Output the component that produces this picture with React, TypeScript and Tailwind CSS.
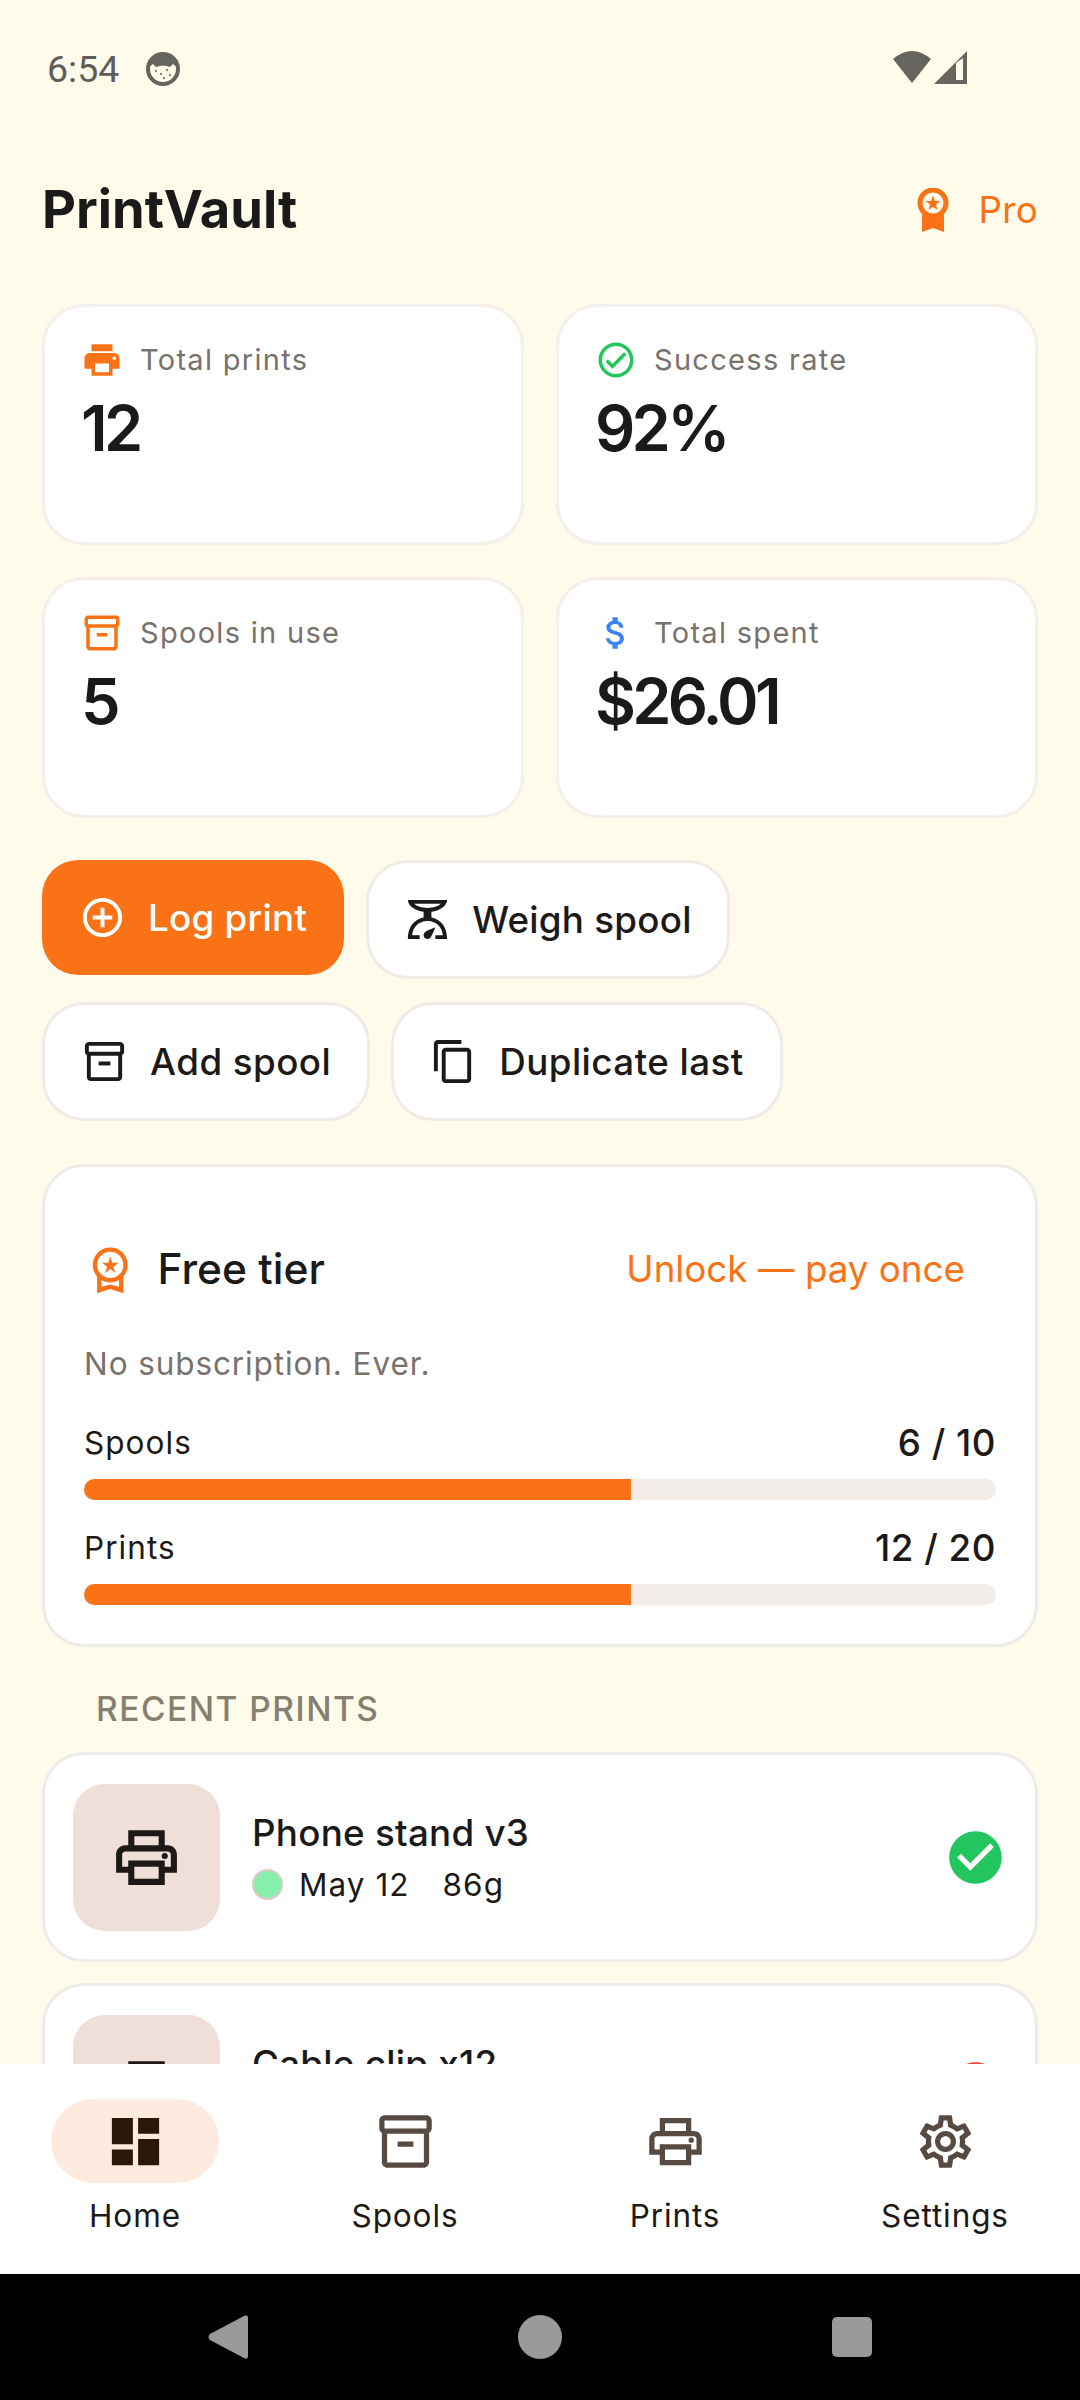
import type { ReactNode } from "react";
import {
  MdAddCircleOutline,
  MdAttachMoney,
  MdCancel,
  MdCheckCircle,
  MdDashboard,
  MdOutlineCheckCircle,
  MdOutlineContentCopy,
  MdOutlineInventory2,
  MdOutlinePrint,
  MdOutlineScale,
  MdOutlineSettings,
  MdOutlineWorkspacePremium,
  MdPrint,
} from "react-icons/md";

function StatusBar() {
  return (
    <div className="flex h-[126px] shrink-0 items-start justify-between pl-[47px] pr-[113px] pt-[50px]">
      <div className="flex items-center gap-[27px]">
        <span className="text-[37.5px] leading-[38px] text-[#5f5e58] [font-family:Roboto,sans-serif]">6:54</span>
        <svg viewBox="0 0 34 34" className="h-[34px] w-[34px]">
          <circle cx="17" cy="17" r="15" fill="#fffbeb" stroke="#65645e" strokeWidth="4" />
          <path d="M3 15 Q3 2 17 2 Q31 2 31 15 L27 12 L24 15 Q17 12 10 15 L7 12Z" fill="#65645e" />
          <circle cx="10" cy="19" r="1.2" fill="#8a8980" />
          <circle cx="15" cy="22" r="1.2" fill="#8a8980" />
          <circle cx="21" cy="18" r="1.2" fill="#8a8980" />
          <circle cx="24" cy="23" r="1.2" fill="#8a8980" />
          <circle cx="18" cy="26" r="1.2" fill="#8a8980" />
        </svg>
      </div>
      <div className="flex items-center gap-[3px]">
        <svg viewBox="0 0 38 34" className="h-[34px] w-[38px]">
          <path d="M0 9 Q19 -7 38 9 L19 33Z" fill="#65645e" />
        </svg>
        <svg viewBox="0 0 33 33" className="h-[33px] w-[33px]">
          <path d="M33 0 V33 H0Z" fill="#65645e" />
          <path d="M22 12 V29 H29 V7 Z" fill="#fffbeb" />
        </svg>
      </div>
    </div>
  );
}

function StatCard({ icon, label, value }: { icon: ReactNode; label: string; value: string }) {
  return (
    <div className="h-[241px] rounded-[42px] border-[3px] border-[#f4efea] bg-white pl-[36px] pt-[32px]">
      <div className="flex h-[42px] items-center gap-[17px]">
        {icon}
        <span className="text-[29px] tracking-[1.3px] text-[#78716c]">{label}</span>
      </div>
      <div className="mt-[7px] text-[63px] font-[580] leading-[80px] tracking-[-3.7px] text-[#1a1a1a]">{value}</div>
    </div>
  );
}

function ActionButton({ icon, label, primary, wide }: { icon: ReactNode; label: string; primary?: boolean; wide?: boolean }) {
  if (primary) {
    return (
      <div className="flex h-[115px] items-center gap-[22px] rounded-[36px] bg-[#f97316] px-[37px] text-[36.75px] font-medium tracking-[0.26px] text-white">
        {icon}
        {label}
      </div>
    );
  }
  return (
    <div
      className={`flex h-[119px] items-center rounded-[42px] border-[3px] border-[#f1ebe7] bg-white text-[36.75px] font-medium text-[#1c1917] ${
        wide ? "gap-[22px] px-[36px] tracking-[0.45px]" : "gap-[21px] px-[35px] tracking-[0.26px]"
      }`}
    >
      {icon}
      {label}
    </div>
  );
}

function Usage({ label, value, top }: { label: string; value: string; top: string }) {
  return (
    <div className={top}>
      <div className="flex h-[42px] items-center justify-between text-[#1c1917]">
        <span className="text-[31.5px] tracking-[1.05px]">{label}</span>
        <span className="text-[36.75px] font-medium tracking-[0.5px]">{value}</span>
      </div>
      <div className="mt-[15px] h-[21px] overflow-hidden rounded-full bg-[#f2ede9]">
        <div className="h-full w-[60%] bg-[#f97316]" />
      </div>
    </div>
  );
}

function PrintRow({ name, date, weight, dot, status }: { name: string; date: string; weight: string; dot: string; status: ReactNode }) {
  return (
    <div className="flex h-[210px] shrink-0 items-center rounded-[42px] border-[3px] border-[#eeecea] bg-white px-[28px]">
      <div className="flex h-[147px] w-[147px] shrink-0 items-center justify-center rounded-[32px] bg-[#f0ded8]">
        <MdOutlinePrint className="text-[73px] text-[#1c1917]" />
      </div>
      <div className="ml-[32px] flex-1">
        <div className="text-[36.75px] font-medium leading-[46px] tracking-[0.26px] text-[#1a1a1a]">{name}</div>
        <div className="mt-[9px] flex items-center text-[31.5px] leading-[40px] tracking-[1.05px] text-[#1c1917]">
          <span className={`h-[31px] w-[31px] rounded-full border-[2px] border-[#e0c9c2] ${dot}`} />
          <span className="ml-[16px]">{date}</span>
          <span className="ml-[33px]">{weight}</span>
        </div>
      </div>
      {status}
    </div>
  );
}

function NavItem({ icon, label, active }: { icon: ReactNode; label: string; active?: boolean }) {
  return (
    <div className="flex flex-col items-center">
      <div
        className={`flex h-[84px] w-[168px] items-center justify-center rounded-[42px] text-[63px] ${
          active ? "bg-[#feebdf] text-[#2b1708]" : "text-[#574a42]"
        }`}
      >
        {icon}
      </div>
      <div className="mt-[12px] text-[31.5px] leading-[42px] tracking-[0.9px] text-[#1c1917]">{label}</div>
    </div>
  );
}

export default function App() {
  return (
    <div className="flex h-[2400px] w-[1080px] flex-col overflow-hidden bg-[#fffbeb] [font-family:Inter,sans-serif]">
      <StatusBar />
      <div className="flex-1 overflow-hidden px-[42px]">
        <div className="flex h-[166px] items-start justify-between pt-[48px]">
          <h1 className="text-[52.5px] font-bold leading-[70px] text-[#1a1a1a]">PrintVault</h1>
          <div className="flex h-[72px] items-center gap-[27px] text-[36.75px] tracking-[0.26px] text-[#f97316]">
            <svg viewBox="0 0 34 44" className="h-[44px] w-[34px]">
              <circle cx="16" cy="15" r="13" fill="none" stroke="currentColor" strokeWidth="5" />
              <path d="M16 7.5 L18 13 L23.5 13 L19 16.5 L20.5 22 L16 18.8 L11.5 22 L13 16.5 L8.5 13 L14 13Z" fill="currentColor" />
              <path d="M5 26 Q16 34 27 26 V44 L16 40 L5 44Z" fill="currentColor" />
            </svg>
            Pro
          </div>
        </div>
        <div className="mt-[12px] grid grid-cols-2 gap-[32px]">
          <StatCard icon={<MdPrint className="text-[42px] text-[#f97316]" />} label="Total prints" value="12" />
          <StatCard icon={<MdOutlineCheckCircle className="text-[42px] text-[#22c55e]" />} label="Success rate" value="92%" />
          <StatCard icon={<MdOutlineInventory2 className="text-[42px] text-[#f97316]" />} label="Spools in use" value="5" />
          <StatCard icon={<MdAttachMoney className="text-[42px] text-[#3b82f6]" />} label="Total spent" value="$26.01" />
        </div>
        <div className="mt-[42px] flex flex-wrap items-start gap-[22px]">
          <ActionButton primary icon={<MdAddCircleOutline className="text-[47px]" />} label="Log print" />
          <ActionButton icon={<MdOutlineScale className="text-[47px]" />} label="Weigh spool" />
        </div>
        <div className="mt-[23px] flex flex-wrap items-start gap-[21px]">
          <ActionButton wide icon={<MdOutlineInventory2 className="text-[47px]" />} label="Add spool" />
          <ActionButton wide icon={<MdOutlineContentCopy className="text-[47px]" />} label="Duplicate last" />
        </div>
        <div className="mt-[43px] h-[483px] rounded-[42px] border-[3px] border-[#eeecea] bg-white px-[39px] pt-[60px]">
          <div className="flex h-[84px] items-center">
            <MdOutlineWorkspacePremium className="text-[52.5px] text-[#f97316]" />
            <span className="ml-[21px] text-[42.5px] font-medium text-[#1a1a1a]">Free tier</span>
            <span className="ml-auto mr-[31px] text-[36.75px] text-[#f97316]">Unlock — pay once</span>
          </div>
          <div className="mt-[28px] text-[31.5px] leading-[50px] tracking-[0.9px] text-[#78716c]">No subscription. Ever.</div>
          <Usage top="mt-[33px]" label="Spools" value="6 / 10" />
          <Usage top="mt-[27px]" label="Prints" value="12 / 20" />
        </div>
        <div className="mt-[42px] h-[40px] pl-[54px] text-[33.5px] font-medium leading-[40px] tracking-[1.5px] text-[#857f70]">RECENT PRINTS</div>
        <div className="mt-[23px] flex flex-col gap-[21px]">
          <PrintRow
            name="Phone stand v3"
            date="May 12"
            weight="86g"
            dot="bg-[#86efac]"
            status={<MdCheckCircle className="text-[63px] text-[#22c55e]" />}
          />
          <PrintRow
            name="Cable clip x12"
            date="May 10"
            weight="24g"
            dot="bg-[#93c5fd]"
            status={<MdCancel className="text-[63px] text-[#ef4444]" />}
          />
        </div>
      </div>
      <nav className="grid h-[210px] shrink-0 grid-cols-4 bg-white pt-[35px]">
        <NavItem active icon={<MdDashboard />} label="Home" />
        <NavItem icon={<MdOutlineInventory2 />} label="Spools" />
        <NavItem icon={<MdOutlinePrint />} label="Prints" />
        <NavItem icon={<MdOutlineSettings />} label="Settings" />
      </nav>
      <div className="flex h-[126px] shrink-0 items-center justify-center gap-[270px] bg-black">
        <svg viewBox="0 0 40 44" className="h-[44px] w-[40px]">
          <path d="M40 3 V41 Q40 45 36 43 L2 25 Q-1 22 2 19 L36 1 Q40 -1 40 3Z" fill="#9a9a9a" />
        </svg>
        <span className="h-[44px] w-[44px] rounded-full bg-[#9a9a9a]" />
        <span className="h-[40px] w-[40px] rounded-[5px] bg-[#9a9a9a]" />
      </div>
    </div>
  );
}
